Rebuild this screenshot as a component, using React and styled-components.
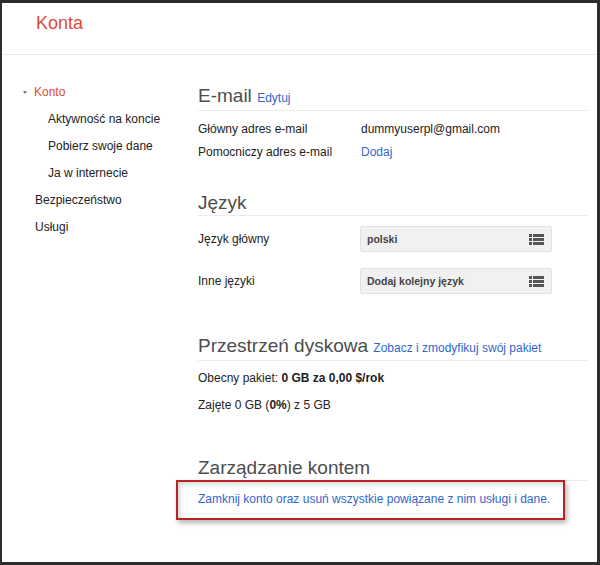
import React from 'react';
import styled, { createGlobalStyle } from 'styled-components';

const GlobalStyle = createGlobalStyle`
  html, body {
    margin: 0;
    padding: 0;
    background: #ffffff;
  }
  body {
    font-family: "Liberation Sans", Arial, sans-serif;
  }
`;

const menu = [
  { label: 'Konto', active: true },
  { label: 'Aktywność na koncie', sub: true },
  { label: 'Pobierz swoje dane', sub: true },
  { label: 'Ja w internecie', sub: true },
  { label: 'Bezpieczeństwo' },
  { label: 'Usługi' },
];

function ListIcon() {
  return (
    <svg width="15" height="11" viewBox="0 0 15 11">
      {[0, 4, 8].map((y) => (
        <g key={y} fill="#555">
          <rect x="0" y={y} width="3" height="3" />
          <rect x="4" y={y} width="11" height="3" />
        </g>
      ))}
    </svg>
  );
}

function App() {
  return (
    <>
      <GlobalStyle />
      <Frame>
        <Header>
          <Title>Konta</Title>
        </Header>
        <Body>
          <Sidebar>
            {menu.map((item) => (
              <NavItem key={item.label} sub={item.sub} active={item.active}>
                {item.active && <Caret />}
                {item.label}
              </NavItem>
            ))}
          </Sidebar>
          <Main>
            <Section>
              <Heading>
                E-mail <HeadLink>Edytuj</HeadLink>
              </Heading>
              <Rows>
                <Row>
                  <Label>Główny adres e-mail</Label>
                  <Value>dummyuserpl@gmail.com</Value>
                </Row>
                <Row>
                  <Label>Pomocniczy adres e-mail</Label>
                  <Link>Dodaj</Link>
                </Row>
              </Rows>
            </Section>

            <Section gap={27}>
              <Heading>Język</Heading>
              <SelectRows>
                <SelectRow>
                  <Label>Język główny</Label>
                  <Select>
                    <span>polski</span>
                    <ListIcon />
                  </Select>
                </SelectRow>
                <SelectRow>
                  <Label>Inne języki</Label>
                  <Select>
                    <span>Dodaj kolejny język</span>
                    <ListIcon />
                  </Select>
                </SelectRow>
              </SelectRows>
            </Section>

            <Section gap={40}>
              <Heading>
                Przestrzeń dyskowa{' '}
                <HeadLink>Zobacz i zmodyfikuj swój pakiet</HeadLink>
              </Heading>
              <Plain>
                <Line>
                  Obecny pakiet: <b>0 GB za 0,00 $/rok</b>
                </Line>
                <Line>
                  Zajęte 0 GB (<b>0%</b>) z 5 GB
                </Line>
              </Plain>
            </Section>

            <Section gap={37}>
              <Heading>Zarządzanie kontem</Heading>
              <Notice>
                <Link>
                  Zamknij konto oraz usuń wszystkie powiązane z nim usługi i
                  dane.
                </Link>
                <Highlight />
              </Notice>
            </Section>
          </Main>
        </Body>
      </Frame>
    </>
  );
}

const Frame = styled.div`
  width: 600px;
  height: 565px;
  box-sizing: border-box;
  border-style: solid;
  border-color: #2d2d2d;
  border-width: 3px 3px 3px 2px;
  background: #ffffff;
  overflow: hidden;
  display: flex;
  flex-direction: column;
`;

const Header = styled.header`
  height: 52px;
  box-sizing: border-box;
  border-bottom: 1px solid #ebebeb;
  padding-left: 34px;
`;

const Title = styled.h1`
  margin: 0;
  padding-top: 9px;
  font-size: 18px;
  line-height: 22px;
  font-weight: normal;
  color: #dd4b39;
`;

const Body = styled.div`
  display: flex;
  flex: 1;
`;

const Sidebar = styled.nav`
  width: 196px;
  flex-shrink: 0;
  padding: 24px 0 0 33px;
  box-sizing: border-box;
`;

const NavItem = styled.div`
  font-size: 12px;
  line-height: 27px;
  height: 27px;
  white-space: nowrap;
  padding-left: ${(props) => (props.sub ? '13px' : '0')};
  color: ${(props) => (props.active ? '#dd4b39' : '#222')};
`;

const Caret = styled.span`
  display: inline-block;
  width: 0;
  height: 0;
  margin-left: -12px;
  margin-right: 7px;
  vertical-align: 2px;
  border-left: 2.5px solid transparent;
  border-right: 2.5px solid transparent;
  border-top: 3px solid #777;
`;

const Main = styled.main`
  flex: 1;
  padding: 29px 9px 0 0;
  color: #222;
  font-size: 12px;
`;

const Section = styled.section`
  margin-top: ${(props) => props.gap || 0}px;
`;

const Heading = styled.h2`
  margin: 0;
  font-size: 19px;
  line-height: 24px;
  font-weight: normal;
  color: #4d4d4d;
  padding-bottom: 0;
  border-bottom: 1px solid #ebebeb;
  white-space: nowrap;
`;

const HeadLink = styled.a`
  font-size: 12px;
  color: #3366cc;
`;

const Rows = styled.div`
  margin-top: 7px;
`;

const Row = styled.div`
  display: grid;
  grid-template-columns: 163px 1fr;
  line-height: 23px;
`;

const Label = styled.div`
  color: #222;
`;

const Value = styled.div`
  color: #222;
`;

const Link = styled.a`
  color: #3366cc;
  cursor: pointer;
`;

const SelectRows = styled.div`
  margin-top: 10px;
  display: flex;
  flex-direction: column;
  gap: 16px;
`;

const SelectRow = styled.div`
  display: grid;
  grid-template-columns: 162px 192px;
  align-items: center;
`;

const Select = styled.div`
  height: 26px;
  box-sizing: border-box;
  border: 1px solid #e2e2e2;
  border-radius: 2px;
  background: #f1f1f1;
  display: flex;
  align-items: center;
  justify-content: space-between;
  padding: 0 7px 0 6px;
  font-size: 10.5px;
  font-weight: bold;
  color: #444;
`;

const Plain = styled.div`
  margin-top: 4px;
`;

const Line = styled.div`
  line-height: 27px;
  b {
    color: #222;
  }
`;

const Notice = styled.div`
  position: relative;
  margin-top: 5px;
  line-height: 27px;
`;

const Highlight = styled.div`
  position: absolute;
  left: -22px;
  top: -6px;
  width: 389px;
  height: 40px;
  box-sizing: border-box;
  border: 2px solid #b8232a;
  box-shadow: 2px 3px 5px rgba(0, 0, 0, 0.3),
    inset 2px 2px 4px rgba(0, 0, 0, 0.18);
  pointer-events: none;
`;

export default App;
